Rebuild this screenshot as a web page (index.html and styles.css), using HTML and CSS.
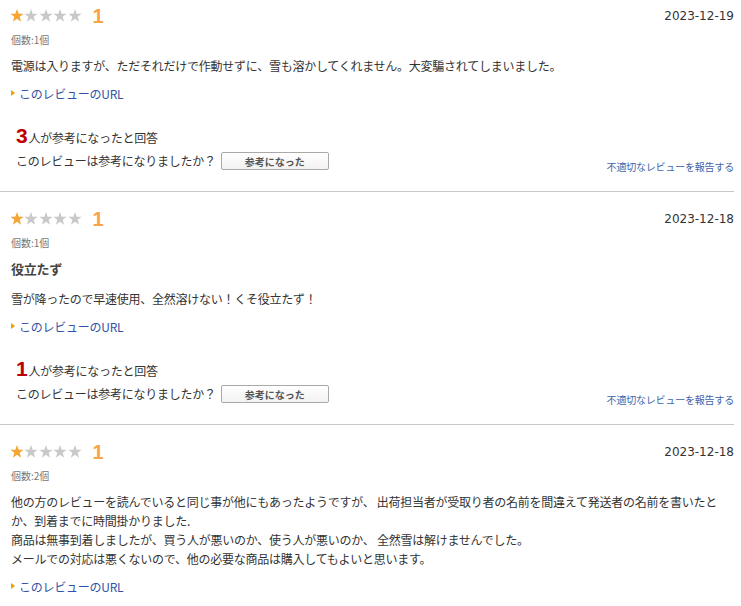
FILE: index.html
```html
<!DOCTYPE html>
<html lang="ja">
<head>
    <meta charset="UTF-8">
    <meta name="viewport" content="width=device-width, initial-scale=1.0">
    <title>レビュー</title>
    <link rel="stylesheet" href="styles.css">
</head>
<body>
    <svg class="defs" width="0" height="0">
        <symbol id="star" viewBox="0 0 14 14">
            <path d="M7 0 L8.65 4.73 L13.66 4.84 L9.66 7.87 L11.11 12.66 L7 9.8 L2.89 12.66 L4.34 7.87 L0.34 4.84 L5.35 4.73Z"/>
        </symbol>
    </svg>

    <div class="review-list">
        <!-- review 1 -->
        <div class="review">
            <div class="review-head">
                <span class="stars">
                    <svg class="star on"><use href="#star"/></svg><svg class="star"><use href="#star"/></svg><svg class="star"><use href="#star"/></svg><svg class="star"><use href="#star"/></svg><svg class="star"><use href="#star"/></svg>
                </span>
                <span class="score">1</span>
                <span class="date">2023-12-19</span>
            </div>
            <div class="count">個数:1個</div>
            <p class="review-body">電源は入りますが、ただそれだけで作動せずに、雪も溶かしてくれません。大変騙されてしまいました。</p>
            <a class="review-url" href="#">このレビューのURL</a>
            <div class="helpful"><span class="helpful-num">3</span>人が参考になったと回答</div>
            <div class="question">
                <span>このレビューは参考になりましたか？</span>
                <button class="helpful-button">参考になった</button>
                <a class="report" href="#">不適切なレビューを報告する</a>
            </div>
        </div>

        <!-- review 2 -->
        <div class="review">
            <div class="review-head">
                <span class="stars">
                    <svg class="star on"><use href="#star"/></svg><svg class="star"><use href="#star"/></svg><svg class="star"><use href="#star"/></svg><svg class="star"><use href="#star"/></svg><svg class="star"><use href="#star"/></svg>
                </span>
                <span class="score">1</span>
                <span class="date">2023-12-18</span>
            </div>
            <div class="count">個数:1個</div>
            <h3 class="review-title">役立たず</h3>
            <p class="review-body">雪が降ったので早速使用、全然溶けない！くそ役立たず！</p>
            <a class="review-url" href="#">このレビューのURL</a>
            <div class="helpful"><span class="helpful-num">1</span>人が参考になったと回答</div>
            <div class="question">
                <span>このレビューは参考になりましたか？</span>
                <button class="helpful-button">参考になった</button>
                <a class="report" href="#">不適切なレビューを報告する</a>
            </div>
        </div>

        <!-- review 3 -->
        <div class="review">
            <div class="review-head">
                <span class="stars">
                    <svg class="star on"><use href="#star"/></svg><svg class="star"><use href="#star"/></svg><svg class="star"><use href="#star"/></svg><svg class="star"><use href="#star"/></svg><svg class="star"><use href="#star"/></svg>
                </span>
                <span class="score">1</span>
                <span class="date">2023-12-18</span>
            </div>
            <div class="count">個数:2個</div>
            <p class="review-body">他の方のレビューを読んでいると同じ事が他にもあったようですが、 出荷担当者が受取り者の名前を間違えて発送者の名前を書いたとか、到着までに時間掛かりました.<br>商品は無事到着しましたが、買う人が悪いのか、使う人が悪いのか、 全然雪は解けませんでした。<br>メールでの対応は悪くないので、他の必要な商品は購入してもよいと思います。</p>
            <a class="review-url" href="#">このレビューのURL</a>
        </div>
    </div>
</body>
</html>
```

FILE: styles.css
```css
* {
    margin: 0;
    padding: 0;
    box-sizing: border-box;
}
body {
    background: #fff;
    color: #333;
    font-family: "Noto Sans CJK JP", "Noto Sans", sans-serif;
    font-size: 12px;
    letter-spacing: -0.25px;
}
.defs {
    position: absolute;
}
.review-list {
    width: 734px;
}
.review {
    padding: 18px 0 21px 11px;
    border-bottom: 1px solid #c8c8c8;
}
.review:first-child {
    padding-top: 7px;
}
.review-head {
    display: flex;
    align-items: center;
    height: 18px;
}
.stars {
    display: flex;
    gap: 0.4px;
    margin-left: -1px;
}
.star {
    width: 14px;
    height: 14px;
    fill: #c9c9c9;
}
.star.on {
    fill: #f6a531;
}
.score {
    margin-left: 11px;
    color: #f9a447;
    font-family: "Liberation Sans", Arial, sans-serif;
    font-weight: bold;
    font-size: 20px;
    line-height: 18px;
}
.date {
    margin-left: auto;
    font-family: "DejaVu Sans", sans-serif;
    font-size: 12px;
    letter-spacing: 0;
}
.count {
    margin-top: 8px;
    font-size: 10px;
    line-height: 14px;
    color: #777;
    letter-spacing: 0;
}
.review-title {
    margin-top: 10px;
    margin-bottom: 11px;
    font-size: 13px;
    line-height: 18px;
    color: #444;
}
.review-body {
    margin-top: 9px;
    padding-right: 12px;
    line-height: 19px;
}
.review-title + .review-body {
    margin-top: 0;
}
.review-url {
    display: block;
    margin-top: 10px;
    line-height: 18px;
    color: #3352a3;
    text-decoration: none;
    position: relative;
    padding-left: 8px;
}
.review-url::before {
    content: "";
    position: absolute;
    left: 0;
    top: 5px;
    border-left: 4px solid #f0a000;
    border-top: 3px solid transparent;
    border-bottom: 3px solid transparent;
}
.helpful {
    margin-top: 22px;
    padding-left: 5px;
    line-height: 22px;
}
.helpful-num {
    color: #bf0000;
    font-family: "Liberation Sans", Arial, sans-serif;
    font-weight: bold;
    font-size: 21px;
    margin-right: 1px;
}
.question {
    display: flex;
    align-items: center;
    margin-top: 3px;
    padding-left: 5px;
    line-height: 18px;
}
.helpful-button {
    margin-left: 5px;
    width: 108px;
    height: 18px;
    border: 1px solid #a9a9a9;
    border-radius: 2px;
    background: linear-gradient(#fff, #f2f2f2);
    color: #555;
    font-family: inherit;
    font-size: 10px;
    font-weight: bold;
    letter-spacing: 0;
}
.report {
    margin-left: auto;
    align-self: flex-end;
    margin-bottom: -6px;
    font-size: 10px;
    letter-spacing: -0.2px;
    color: #4463a8;
    text-decoration: none;
}
```
